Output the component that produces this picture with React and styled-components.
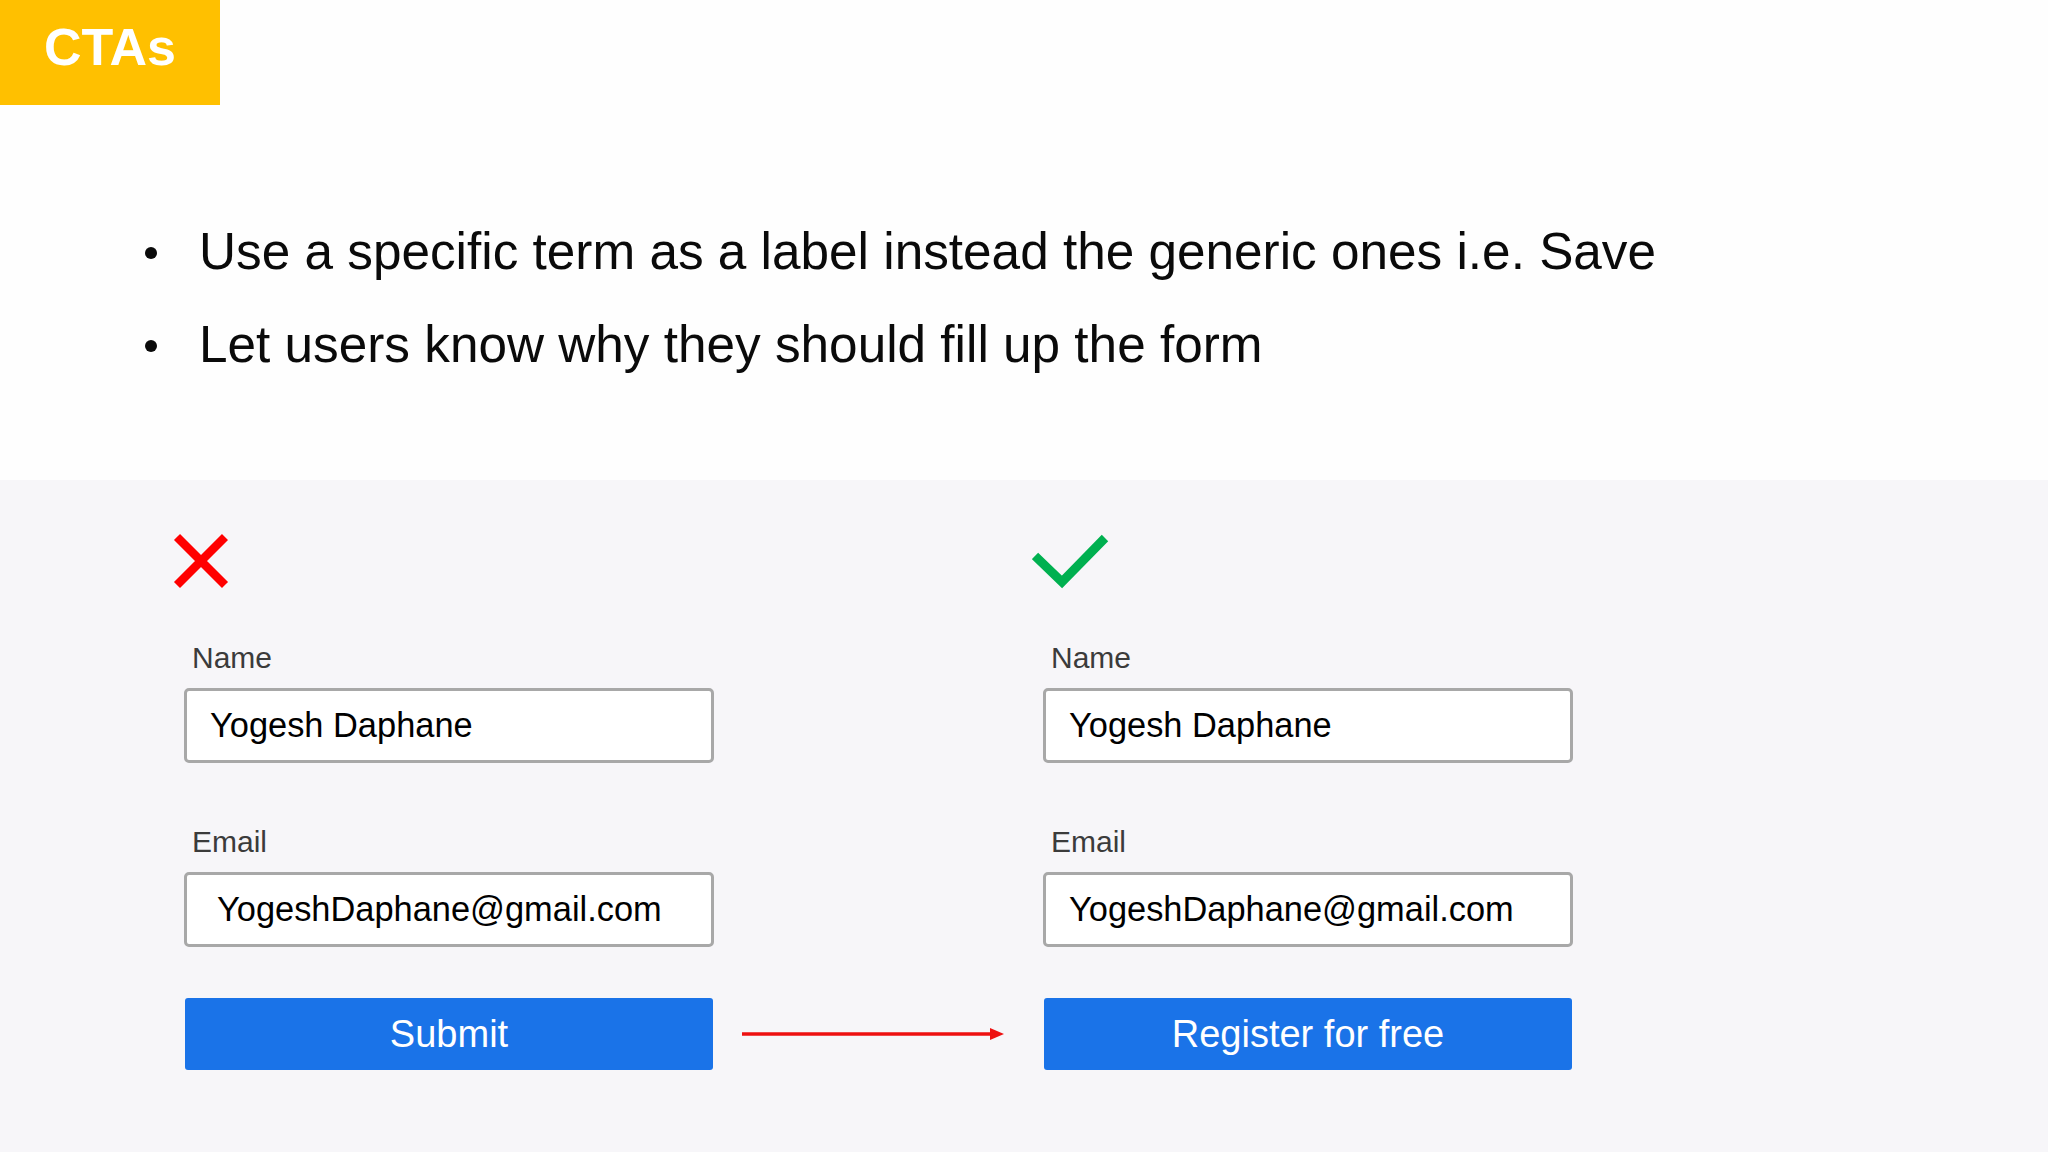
import styled, { createGlobalStyle } from "styled-components";

const GlobalStyle = createGlobalStyle`
  html, body {
    margin: 0;
    padding: 0;
    background: #fefefe;
  }

  body {
    font-family: "Liberation Sans", Arial, sans-serif;
  }

  * {
    box-sizing: border-box;
  }
`;

const CrossIcon = () => (
  <svg width="56" height="56" viewBox="0 0 56 56">
    <path d="M4 4 L52 52 M52 4 L4 52" stroke="#ff0000" strokeWidth="8.5" fill="none" />
  </svg>
);

const CheckIcon = () => (
  <svg width="78" height="56" viewBox="0 0 78 56">
    <path
      d="M3 23 L30 49 L73 5"
      stroke="#00b050"
      strokeWidth="9"
      fill="none"
      strokeLinejoin="miter"
    />
  </svg>
);

const Arrow = () => (
  <svg width="262" height="14" viewBox="0 0 262 14">
    <line x1="0" y1="7" x2="250" y2="7" stroke="#ee1111" strokeWidth="3.5" />
    <polygon points="248,1 262,7 248,13" fill="#ee1111" />
  </svg>
);

const SignupForm = ({ icon, buttonLabel, emailInset }) => {
  return (
    <FormColumn>
      <IconBox>{icon}</IconBox>
      <Fields>
        <Label>Name</Label>
        <FieldBox>Yogesh Daphane</FieldBox>
        <Label $spaced>Email</Label>
        <FieldBox $inset={emailInset}>YogeshDaphane@gmail.com</FieldBox>
        <CtaButton>{buttonLabel}</CtaButton>
      </Fields>
    </FormColumn>
  );
};

const App = () => {
  return (
    <Page>
      <GlobalStyle />
      <TopSection>
        <Tag>CTAs</Tag>
        <PointList>
          <Point>
            <Dot />
            Use a specific term as a label instead the generic ones i.e. Save
          </Point>
          <Point>
            <Dot />
            Let users know why they should fill up the form
          </Point>
        </PointList>
      </TopSection>
      <CompareSection>
        <SignupForm icon={<CrossIcon />} buttonLabel="Submit" emailInset={7} />
        <ArrowSlot>
          <Arrow />
        </ArrowSlot>
        <SignupForm icon={<CheckIcon />} buttonLabel="Register for free" />
      </CompareSection>
    </Page>
  );
};

export default App;

const Page = styled.div`
  width: 2048px;
  height: 1152px;
  display: flex;
  flex-direction: column;
  overflow: hidden;
  background: #fefefe;
`;

const TopSection = styled.section`
  height: 480px;
  flex-shrink: 0;
  background: #fefefe;
`;

const Tag = styled.div`
  display: inline-block;
  width: 220px;
  height: 105px;
  padding-bottom: 10px;
  background: #ffc000;
  color: #ffffff;
  font-size: 52px;
  font-weight: 700;
  line-height: 95px;
  text-align: center;
`;

const PointList = styled.ul`
  list-style: none;
  margin: 100px 0 0;
  padding: 0 0 0 145px;
`;

const Point = styled.li`
  display: flex;
  align-items: center;
  gap: 42px;
  font-size: 51.3px;
  line-height: 93px;
  color: #0a0a0a;
`;

const Dot = styled.span`
  width: 12px;
  height: 12px;
  margin-top: 3px;
  border-radius: 50%;
  background: #0a0a0a;
  flex-shrink: 0;
`;

const CompareSection = styled.section`
  flex: 1;
  display: flex;
  padding: 53px 0 82px 173px;
  background: #f7f6f9;
`;

const FormColumn = styled.div`
  width: 541px;
  display: flex;
  flex-direction: column;
`;

const IconBox = styled.div`
  height: 56px;
  display: flex;
  align-items: flex-start;
`;

const Fields = styled.div`
  display: flex;
  flex-direction: column;
  padding-left: 11px;
  margin-top: 52px;
`;

const Label = styled.div`
  font-size: 30px;
  line-height: 34px;
  padding-left: 8px;
  color: #3b3b3b;
  margin-top: ${(p) => (p.$spaced ? "62px" : "0")};
  margin-bottom: 13px;
`;

const FieldBox = styled.div`
  width: 530px;
  height: 75px;
  display: flex;
  align-items: center;
  padding-left: ${(p) => 23 + (p.$inset || 0)}px;
  border: 3px solid #a8a8a8;
  border-radius: 5px;
  background: #ffffff;
  color: #000000;
  font-size: 34.4px;
`;

const CtaButton = styled.button`
  width: 528px;
  height: 72px;
  margin: 51px 0 0 1px;
  border: none;
  border-radius: 3px;
  background: #1a73e8;
  color: #ffffff;
  font-family: "Liberation Sans", Arial, sans-serif;
  font-size: 38px;
  cursor: pointer;
`;

const ArrowSlot = styled.div`
  width: 318px;
  height: 72px;
  align-self: flex-end;
  display: flex;
  align-items: center;
  padding-left: 28px;
`;
